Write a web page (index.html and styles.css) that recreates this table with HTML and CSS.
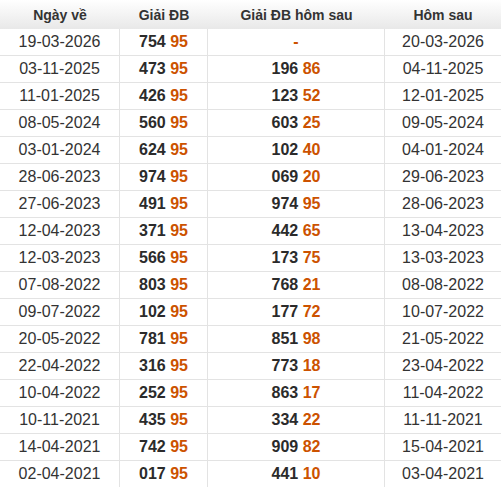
FILE: index.html
```html
<!DOCTYPE html>
<html>
<head>
<meta charset="utf-8">
<link rel="stylesheet" href="styles.css">
</head>
<body>
<table class="kq">
<colgroup><col class="c1"><col class="c2"><col class="c3"><col class="c4"></colgroup>
<thead>
<tr><th>Ngày về</th><th>Giải ĐB</th><th>Giải ĐB hôm sau</th><th>Hôm sau</th></tr>
</thead>
<tbody>
<tr><td>19-03-2026</td><td class="n">754 <span class="o">95</span></td><td class="n"><span class="o">-</span></td><td>20-03-2026</td></tr>
<tr><td>03-11-2025</td><td class="n">473 <span class="o">95</span></td><td class="n">196 <span class="o">86</span></td><td>04-11-2025</td></tr>
<tr><td>11-01-2025</td><td class="n">426 <span class="o">95</span></td><td class="n">123 <span class="o">52</span></td><td>12-01-2025</td></tr>
<tr><td>08-05-2024</td><td class="n">560 <span class="o">95</span></td><td class="n">603 <span class="o">25</span></td><td>09-05-2024</td></tr>
<tr><td>03-01-2024</td><td class="n">624 <span class="o">95</span></td><td class="n">102 <span class="o">40</span></td><td>04-01-2024</td></tr>
<tr><td>28-06-2023</td><td class="n">974 <span class="o">95</span></td><td class="n">069 <span class="o">20</span></td><td>29-06-2023</td></tr>
<tr><td>27-06-2023</td><td class="n">491 <span class="o">95</span></td><td class="n">974 <span class="o">95</span></td><td>28-06-2023</td></tr>
<tr><td>12-04-2023</td><td class="n">371 <span class="o">95</span></td><td class="n">442 <span class="o">65</span></td><td>13-04-2023</td></tr>
<tr><td>12-03-2023</td><td class="n">566 <span class="o">95</span></td><td class="n">173 <span class="o">75</span></td><td>13-03-2023</td></tr>
<tr><td>07-08-2022</td><td class="n">803 <span class="o">95</span></td><td class="n">768 <span class="o">21</span></td><td>08-08-2022</td></tr>
<tr><td>09-07-2022</td><td class="n">102 <span class="o">95</span></td><td class="n">177 <span class="o">72</span></td><td>10-07-2022</td></tr>
<tr><td>20-05-2022</td><td class="n">781 <span class="o">95</span></td><td class="n">851 <span class="o">98</span></td><td>21-05-2022</td></tr>
<tr><td>22-04-2022</td><td class="n">316 <span class="o">95</span></td><td class="n">773 <span class="o">18</span></td><td>23-04-2022</td></tr>
<tr><td>10-04-2022</td><td class="n">252 <span class="o">95</span></td><td class="n">863 <span class="o">17</span></td><td>11-04-2022</td></tr>
<tr><td>10-11-2021</td><td class="n">435 <span class="o">95</span></td><td class="n">334 <span class="o">22</span></td><td>11-11-2021</td></tr>
<tr><td>14-04-2021</td><td class="n">742 <span class="o">95</span></td><td class="n">909 <span class="o">82</span></td><td>15-04-2021</td></tr>
<tr><td>02-04-2021</td><td class="n">017 <span class="o">95</span></td><td class="n">441 <span class="o">10</span></td><td>03-04-2021</td></tr>
</tbody>
</table>
</body>
</html>
```
FILE: styles.css
```css
html, body {
  margin: 0;
  padding: 0;
  background: #fff;
}
body {
  font-family: "Liberation Sans", Arial, sans-serif;
  color: #333;
}
.kq {
  width: 501px;
  border-collapse: separate;
  border-spacing: 0;
  table-layout: fixed;
}
.c1 { width: 120px; }
.c2 { width: 88px; }
.c3 { width: 177px; }
.c4 { width: 116px; }
.kq th {
  box-sizing: border-box;
  height: 29px;
  padding: 0;
  font-size: 14px;
  font-weight: bold;
  color: #333;
  text-align: center;
  background: linear-gradient(to bottom, #ffffff, #e8e8e8);
  border: none;
}
.kq td {
  box-sizing: content-box;
  height: 26px;
  padding: 0;
  font-size: 16px;
  line-height: 26px;
  text-align: center;
  border: none;
  border-right: 1px solid #e3e3e3;
  border-bottom: 1px solid #e3e3e3;
  color: #333;
}
.kq tr td:last-child { border-right: none; }
.kq tbody tr:last-child td { border-bottom: none; }
.kq td.n {
  font-weight: bold;
  color: #2b2b2b;
}
.o {
  color: #cc5200;
}
```
